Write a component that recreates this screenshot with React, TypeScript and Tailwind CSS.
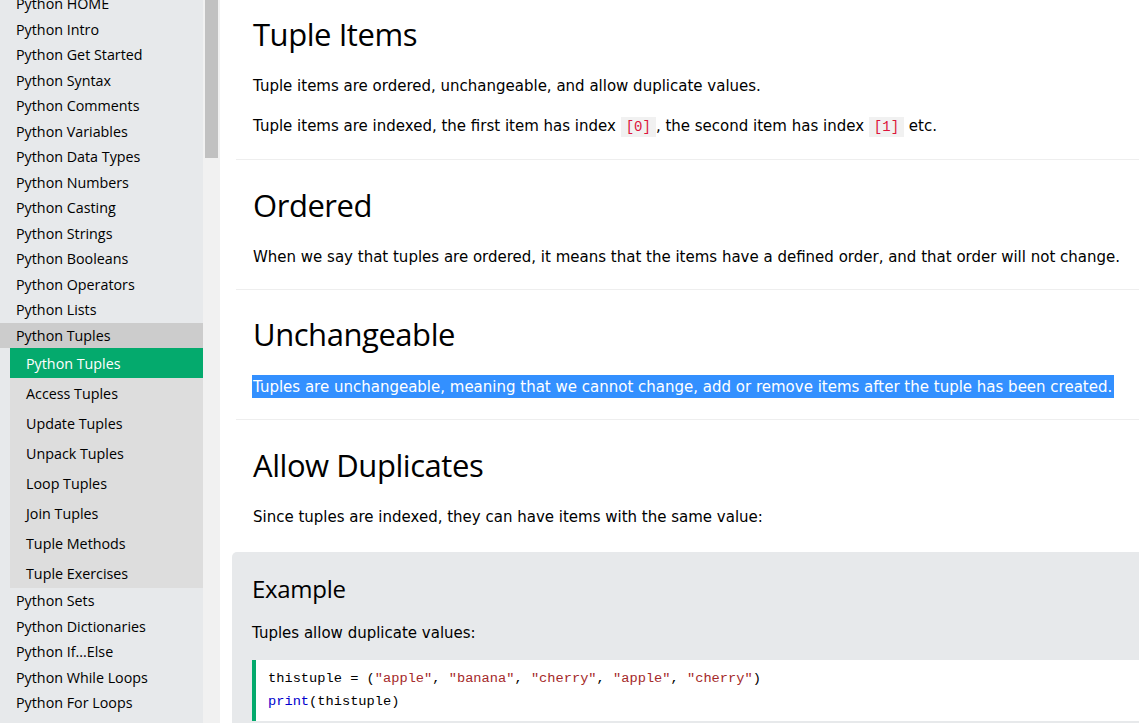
import React from 'react';

const TOP_ITEMS = [
  'Python HOME',
  'Python Intro',
  'Python Get Started',
  'Python Syntax',
  'Python Comments',
  'Python Variables',
  'Python Data Types',
  'Python Numbers',
  'Python Casting',
  'Python Strings',
  'Python Booleans',
  'Python Operators',
  'Python Lists',
];

const SUB_ITEMS = [
  'Python Tuples',
  'Access Tuples',
  'Update Tuples',
  'Unpack Tuples',
  'Loop Tuples',
  'Join Tuples',
  'Tuple Methods',
  'Tuple Exercises',
];

const AFTER_ITEMS = [
  'Python Sets',
  'Python Dictionaries',
  'Python If...Else',
  'Python While Loops',
  'Python For Loops',
  'Python Functions',
];

const navFont = { fontFamily: '"Open Sans", "Noto Sans", sans-serif' };

const NavItem: React.FC<{ label: string; active?: boolean }> = ({ label, active }) => (
  <div
    className={`h-[25.5px] pl-[16px] flex items-center text-[14.3px] text-black whitespace-nowrap ${active ? 'bg-[#cccccc]' : ''}`}
  >
    {label}
  </div>
);

const Sidebar: React.FC = () => (
  <div className="w-[203px] h-full bg-[#e7e9eb] overflow-hidden shrink-0" style={navFont}>
    <div className="mt-[-9px]">
      {TOP_ITEMS.map((t) => (
        <NavItem key={t} label={t} />
      ))}
      <NavItem label="Python Tuples" active />
      <div className="ml-[10px] bg-[#dddddd]">
        {SUB_ITEMS.map((t, i) => (
          <div
            key={t}
            className={`h-[30px] pl-[16px] pt-[1px] flex items-center text-[14.3px] whitespace-nowrap ${i === 0 ? 'bg-[#04aa6d] text-white' : 'text-black'}`}
          >
            {t}
          </div>
        ))}
      </div>
      {AFTER_ITEMS.map((t) => (
        <NavItem key={t} label={t} />
      ))}
    </div>
  </div>
);

const Scrollbar: React.FC = () => (
  <div className="w-[17px] h-full bg-[#f1f1f1] shrink-0">
    <div className="ml-[2px] w-[13px] h-[158px] bg-[#c1c1c1]" />
  </div>
);

const Code: React.FC<{ children: React.ReactNode }> = ({ children }) => (
  <code className="bg-[#f1f1f1] text-[#dc143c] px-[5px] py-[2px] text-[14px] font-['Liberation_Mono',monospace]">
    {children}
  </code>
);

const H2: React.FC<{ children: React.ReactNode; className?: string }> = ({ children, className }) => (
  <h2
    className={`text-[31px] leading-[40px] tracking-[-0.45px] font-normal text-black ${className ?? ''}`}
    style={navFont}
  >
    {children}
  </h2>
);

const P: React.FC<{ children: React.ReactNode; className?: string }> = ({ children, className }) => (
  <p className={`text-[15px] leading-[24px] text-black whitespace-nowrap ${className ?? ''}`}>{children}</p>
);

const Hr = () => <hr className="border-0 border-t border-[#eeeeee] mr-[-40px]" />;

const Str: React.FC<{ children: React.ReactNode }> = ({ children }) => (
  <span className="text-[#a52a2a]">{children}</span>
);

const App: React.FC = () => {
  return (
    <div
      className="w-[1139px] h-[723px] flex overflow-hidden bg-white"
      style={{ fontFamily: '"DejaVu Sans", Verdana, sans-serif' }}
    >
      <Sidebar />
      <Scrollbar />
      <main className="flex-1 min-w-0 pl-[16px] overflow-hidden">
        <div className="pl-[17px] pt-[14px]">
          <H2>Tuple Items</H2>
          <P className="mt-[20px]">Tuple items are ordered, unchangeable, and allow duplicate values.</P>
          <P className="mt-[16px]">
            Tuple items are indexed, the first item has index <Code>[0]</Code>, the second item has index{' '}
            <Code>[1]</Code> etc.
          </P>
        </div>
        <div className="mt-[20px]">
          <Hr />
        </div>

        <div className="pl-[17px] pt-[25px]">
          <H2>Ordered</H2>
          <P className="mt-[20px]">
            When we say that tuples are ordered, it means that the items have a defined order, and that order will not
            change.
          </P>
        </div>
        <div className="mt-[19.5px]">
          <Hr />
        </div>

        <div className="pl-[17px] pt-[24.5px]">
          <H2>Unchangeable</H2>
          <P className="mt-[20px]">
            <span className="bg-[#3390ff] text-white py-[2.5px] pl-[1px] ml-[-1px] pr-[2px]">
              Tuples are unchangeable, meaning that we cannot change, add or remove items after the tuple has been
              created.
            </span>
          </P>
        </div>
        <div className="mt-[20.5px]">
          <Hr />
        </div>

        <div className="pl-[17px] pt-[25px]">
          <H2>Allow Duplicates</H2>
          <P className="mt-[20px]">Since tuples are indexed, they can have items with the same value:</P>
        </div>

        <div className="mt-[23px] ml-[-4px] mr-[-40px] bg-[#e7e9eb] rounded-[5px] pl-[20px] pt-[21px] pb-[16px]">
          <h2 className="text-[24px] leading-[32px] tracking-[-0.3px] font-normal text-black" style={navFont}>
            Example
          </h2>
          <P className="mt-[16px]">Tuples allow duplicate values:</P>
          <div className="mt-[15.5px] bg-white border-l-[4px] border-[#04aa6d] pl-[12px] py-[8px] text-[13.7px] leading-[22.5px] text-black font-['Liberation_Mono',monospace] whitespace-pre">
            <div>
              thistuple = (<Str>"apple"</Str>, <Str>"banana"</Str>, <Str>"cherry"</Str>, <Str>"apple"</Str>,{' '}
              <Str>"cherry"</Str>)
            </div>
            <div>
              <span className="text-[#0000cd]">print</span>(thistuple)
            </div>
          </div>
        </div>
      </main>
    </div>
  );
};

export default App;
